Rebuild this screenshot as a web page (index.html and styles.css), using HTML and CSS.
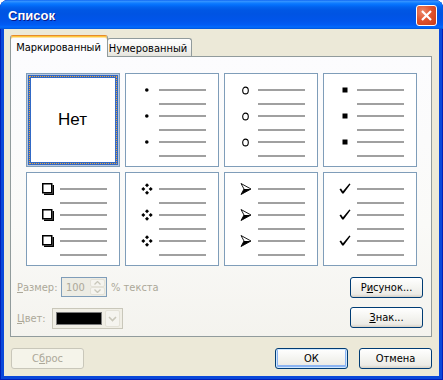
FILE: index.html
```
<!DOCTYPE html>
<html lang="ru">
<head>
<meta charset="utf-8">
<title>Список</title>
<link rel="stylesheet" href="styles.css">
</head>
<body>
<svg class="defs" width="0" height="0" aria-hidden="true">
  <defs>
    <symbol id="b-dot" viewBox="0 0 12 12"><circle cx="5.8" cy="6" r="1.8" fill="#000"/></symbol>
    <symbol id="b-o" viewBox="0 0 12 12"><ellipse cx="5.5" cy="6.5" rx="2.8" ry="3.4" fill="none" stroke="#000" stroke-width="1.1"/></symbol>
    <symbol id="b-sq" viewBox="0 0 12 12"><rect x="3.5" y="3.5" width="5" height="5" fill="#000"/></symbol>
    <symbol id="b-box" viewBox="0 0 12 12"><rect x="0.75" y="0.75" width="9" height="9" fill="#fff" stroke="#000" stroke-width="1.5"/><path d="M10.5 2H12V12H2V10.5H10.5Z" fill="#000"/></symbol>
    <symbol id="b-dia" viewBox="0 0 12 12"><path d="M6 0.3L8 2.3L6 4.3L4 2.3ZM2.3 4L4.3 6L2.3 8L0.3 6ZM9.7 4L11.7 6L9.7 8L7.7 6ZM6 7.7L8 9.7L6 11.7L4 9.7Z" fill="#000"/></symbol>
    <symbol id="b-arr" viewBox="0 0 12 12"><path d="M1 0.5L11 6L1 11.5L4 6Z" fill="#fff" stroke="#000" stroke-width="0.9" stroke-linejoin="round"/><path d="M4 6L11 6L1 11.5Z" fill="#000"/></symbol>
    <symbol id="b-chk" viewBox="0 0 12 12"><path d="M0.5 6.2L2 5.4L3.9 8.2L10.4 0.6L11.5 1.2L4.6 10.6L3.2 10.6Z" fill="#000"/></symbol>
  </defs>
</svg>

<div class="window">
  <div class="titlebar">
    <span class="title">Список</span>
    <span class="close"><svg width="19" height="19" viewBox="0 0 19 19"><path d="M5 5L14 14M14 5L5 14" stroke="#fff" stroke-width="2.2"/></svg></span>
  </div>

  <div class="client">
    <div class="tabs">
      <div class="tab active">Маркированный</div>
      <div class="tab inactive">Нумерованный</div>
    </div>

    <div class="panel">
      <div class="tiles">
        <div class="tile sel"><span class="none">Нет</span></div>

        <div class="tile">
          <div class="item"><div class="row"><svg class="bullet"><use href="#b-dot"/></svg><i class="line"></i></div><div class="row"><span class="bullet"></span><i class="line"></i></div></div>
          <div class="item"><div class="row"><svg class="bullet"><use href="#b-dot"/></svg><i class="line"></i></div><div class="row"><span class="bullet"></span><i class="line"></i></div></div>
          <div class="item"><div class="row"><svg class="bullet"><use href="#b-dot"/></svg><i class="line"></i></div><div class="row"><span class="bullet"></span><i class="line"></i></div></div>
        </div>

        <div class="tile">
          <div class="item"><div class="row"><svg class="bullet"><use href="#b-o"/></svg><i class="line"></i></div><div class="row"><span class="bullet"></span><i class="line"></i></div></div>
          <div class="item"><div class="row"><svg class="bullet"><use href="#b-o"/></svg><i class="line"></i></div><div class="row"><span class="bullet"></span><i class="line"></i></div></div>
          <div class="item"><div class="row"><svg class="bullet"><use href="#b-o"/></svg><i class="line"></i></div><div class="row"><span class="bullet"></span><i class="line"></i></div></div>
        </div>

        <div class="tile">
          <div class="item"><div class="row"><svg class="bullet"><use href="#b-sq"/></svg><i class="line"></i></div><div class="row"><span class="bullet"></span><i class="line"></i></div></div>
          <div class="item"><div class="row"><svg class="bullet"><use href="#b-sq"/></svg><i class="line"></i></div><div class="row"><span class="bullet"></span><i class="line"></i></div></div>
          <div class="item"><div class="row"><svg class="bullet"><use href="#b-sq"/></svg><i class="line"></i></div><div class="row"><span class="bullet"></span><i class="line"></i></div></div>
        </div>

        <div class="tile">
          <div class="item"><div class="row"><svg class="bullet"><use href="#b-box"/></svg><i class="line"></i></div><div class="row"><span class="bullet"></span><i class="line"></i></div></div>
          <div class="item"><div class="row"><svg class="bullet"><use href="#b-box"/></svg><i class="line"></i></div><div class="row"><span class="bullet"></span><i class="line"></i></div></div>
          <div class="item"><div class="row"><svg class="bullet"><use href="#b-box"/></svg><i class="line"></i></div><div class="row"><span class="bullet"></span><i class="line"></i></div></div>
        </div>

        <div class="tile">
          <div class="item"><div class="row"><svg class="bullet"><use href="#b-dia"/></svg><i class="line"></i></div><div class="row"><span class="bullet"></span><i class="line"></i></div></div>
          <div class="item"><div class="row"><svg class="bullet"><use href="#b-dia"/></svg><i class="line"></i></div><div class="row"><span class="bullet"></span><i class="line"></i></div></div>
          <div class="item"><div class="row"><svg class="bullet"><use href="#b-dia"/></svg><i class="line"></i></div><div class="row"><span class="bullet"></span><i class="line"></i></div></div>
        </div>

        <div class="tile">
          <div class="item"><div class="row"><svg class="bullet"><use href="#b-arr"/></svg><i class="line"></i></div><div class="row"><span class="bullet"></span><i class="line"></i></div></div>
          <div class="item"><div class="row"><svg class="bullet"><use href="#b-arr"/></svg><i class="line"></i></div><div class="row"><span class="bullet"></span><i class="line"></i></div></div>
          <div class="item"><div class="row"><svg class="bullet"><use href="#b-arr"/></svg><i class="line"></i></div><div class="row"><span class="bullet"></span><i class="line"></i></div></div>
        </div>

        <div class="tile">
          <div class="item"><div class="row"><svg class="bullet"><use href="#b-chk"/></svg><i class="line"></i></div><div class="row"><span class="bullet"></span><i class="line"></i></div></div>
          <div class="item"><div class="row"><svg class="bullet"><use href="#b-chk"/></svg><i class="line"></i></div><div class="row"><span class="bullet"></span><i class="line"></i></div></div>
          <div class="item"><div class="row"><svg class="bullet"><use href="#b-chk"/></svg><i class="line"></i></div><div class="row"><span class="bullet"></span><i class="line"></i></div></div>
        </div>
      </div>

      <div class="controls">
        <div class="fields">
          <div class="frow">
            <span class="lbl lbl-size"><u>Р</u>азмер:</span>
            <span class="spin">
              <span class="spin-val">100</span>
              <span class="spin-btns">
                <span class="sb"><svg width="7" height="4" viewBox="0 0 7 4"><path d="M0.5 3.5L3.5 0.5L6.5 3.5" fill="none" stroke="#C9C7BA" stroke-width="1.3"/></svg></span>
                <span class="sb"><svg width="7" height="4" viewBox="0 0 7 4"><path d="M0.5 0.5L3.5 3.5L6.5 0.5" fill="none" stroke="#C9C7BA" stroke-width="1.3"/></svg></span>
              </span>
            </span>
            <span class="pct">% текста</span>
          </div>
          <div class="frow">
            <span class="lbl lbl-color"><u>Ц</u>вет:</span>
            <span class="combo">
              <span class="swatch"></span>
              <span class="drop"><svg width="9" height="6" viewBox="0 0 9 6"><path d="M1 1L4.5 4.5L8 1" fill="none" stroke="#C9C7BA" stroke-width="1.6"/></svg></span>
            </span>
          </div>
        </div>
        <div class="rbtns">
          <span class="btn">Р<u>и</u>сунок...</span>
          <span class="btn"><u>З</u>нак...</span>
        </div>
      </div>
    </div>

    <div class="bottom">
      <span class="btn disabled">С<u>б</u>рос</span>
      <span class="spacer"></span>
      <span class="btn default">ОК</span>
      <span class="btn">Отмена</span>
    </div>
  </div>
</div>
</body>
</html>
```
FILE: styles.css
```
* { box-sizing: border-box; }

body {
  margin: 0;
  background: #ffffff;
  font-family: "DejaVu Sans Condensed", "DejaVu Sans", sans-serif;
  font-size: 11px;
  color: #000;
}

.defs { position: absolute; width: 0; height: 0; }

.window {
  width: 443px;
  height: 380px;
  display: flex;
  flex-direction: column;
  border-radius: 8px 8px 0 0;
  overflow: hidden;
  background: #0A48DA;
  box-shadow: inset 1px 0 #0020B8, inset -1px 0 #0020B8, inset 0 -1px #0020B8;
}

.titlebar {
  height: 29px;
  flex: none;
  display: flex;
  align-items: center;
  padding-left: 8px;
  background: linear-gradient(to bottom,
    #0058EE 0px, #3A93FF 1px, #288EFF 2px, #127DFF 3px, #036FFC 5px,
    #0262EE 7px, #0057E5 10px, #0054E3 14px, #0055EB 21px, #005BF5 25px,
    #026AFE 27px, #0062EF 28px, #0052D6 29px);
}

.title {
  flex: 1;
  font: bold 13px "Liberation Sans", Arial, sans-serif;
  color: #fff;
  text-shadow: 1px 1px #0A1A8C;
  padding-top: 1px;
}

.close {
  width: 21px;
  height: 21px;
  margin: 1px 6px 0 0;
  border: 1px solid #fff;
  border-radius: 3px;
  background: radial-gradient(circle at 30% 30%, #ED8A6B 0, #E0542F 45%, #C83A16 100%);
  display: flex;
  align-items: center;
  justify-content: center;
}

.client {
  flex: 1;
  margin: 0 4px 4px;
  background: #ECE9D8;
  display: flex;
  flex-direction: column;
}

/* Tabs */
.tabs {
  display: flex;
  align-items: flex-end;
  margin: 6px 0 0 6px;
  position: relative;
  z-index: 1;
}

.tab {
  display: flex;
  align-items: center;
  justify-content: center;
  border: 1px solid #919B9C;
  border-bottom: 0;
  border-radius: 3px 3px 0 0;
}

.tab.active {
  width: 98px;
  height: 22px;
  margin-bottom: -1px;
  padding-right: 1px;
  padding-top: 1px;
  background: #FCFCFE;
  border-top: 1px solid #E68B2C;
  box-shadow: inset 0 1px #FFC83C, inset 0 2px #FFE3A3;
}

.tab.inactive {
  width: 85px;
  height: 18px;
  margin-left: -1px;
  padding-right: 3px;
  padding-top: 1px;
  background: linear-gradient(#FFFFFF, #F3F3EF 60%, #E5E4DD);
}

/* Panel */
.panel {
  height: 281px;
  margin: 0 7px 0 6px;
  border: 1px solid #919B9C;
  background: linear-gradient(#FCFCFE, #FAFAF8 60%, #F4F3EE);
  display: flex;
  flex-direction: column;
}

.tiles {
  display: grid;
  grid-template-columns: repeat(4, 94px);
  grid-auto-rows: 94px;
  gap: 5px;
  padding: 16px 0 0 15px;
}

.tile {
  background: #fff;
  border: 1px solid #7F9DB9;
  display: flex;
  flex-direction: column;
  padding-top: 10px;
}

.tile.sel {
  padding-top: 0;
  align-items: center;
  justify-content: center;
  box-shadow: inset 0 0 0 1px #B9C9E0, inset 0 0 0 4px #3169C6;
  outline: 1px dotted #F0A63A;
  outline-offset: -4px;
}

.none {
  font-family: "Liberation Sans", Arial, sans-serif;
  font-size: 17px;
  margin-left: -1px;
}

.item {
  display: flex;
  flex-direction: column;
  gap: 2px;
}

.row {
  height: 12px;
  display: flex;
  align-items: center;
  padding-left: 15px;
}

.bullet {
  width: 12px;
  height: 12px;
  margin-right: 6px;
  flex: none;
  display: block;
}

.line {
  width: 47px;
  height: 2px;
  background: #A0A0A0;
}

/* Lower controls */
.controls {
  display: flex;
  justify-content: space-between;
  padding: 11px 8px 0 6px;
}

.fields {
  display: flex;
  flex-direction: column;
  gap: 10px;
}

.frow {
  height: 21px;
  display: flex;
  align-items: center;
  color: #ACA899;
}

.lbl-size { width: 44px; }
.lbl-color { width: 35px; }

.spin {
  width: 46px;
  height: 20px;
  align-self: flex-start;
  border: 1px solid #7F9DB9;
  background: #EDECE4;
  display: flex;
  align-items: stretch;
}

.spin-val {
  flex: 1;
  padding-left: 4px;
  display: flex;
  align-items: center;
}

.spin-btns {
  width: 15px;
  margin: 1px;
  display: flex;
  flex-direction: column;
  gap: 0;
}

.sb {
  flex: 1;
  border: 1px solid #E4E2D8;
  border-radius: 2px;
  background: #F5F4EF;
  display: flex;
  align-items: center;
  justify-content: center;
}

.pct { margin-left: 4px; }

.combo {
  width: 71px;
  height: 21px;
  border: 1px solid #C9C7BA;
  background: #F0EEE5;
  display: flex;
  align-items: center;
  padding: 0 2px 0 3px;
}

.swatch {
  width: 46px;
  height: 13px;
  background: #000;
  border: 1px solid #7A7A7A;
}

.drop {
  width: 15px;
  height: 17px;
  margin-left: auto;
  border: 1px solid #E4E2D8;
  border-radius: 2px;
  background: #F5F4EF;
  display: flex;
  align-items: center;
  justify-content: center;
}

.rbtns {
  display: flex;
  flex-direction: column;
  gap: 9px;
}

/* Buttons */
.btn {
  width: 73px;
  height: 21px;
  border: 1px solid #003C74;
  border-radius: 3px;
  background: linear-gradient(#FFFFFF, #F4F4F0 50%, #ECEBE6 85%, #D6D0C5);
  display: flex;
  align-items: center;
  justify-content: center;
  color: #000;
}

.btn.default {
  box-shadow: inset 0 0 0 1px #CEE7FF, inset 0 -1px 0 2px #8CB4F2;
}

.btn.disabled {
  border-color: #C9C7BA;
  background: #F5F4EA;
  color: #ACA899;
}

.bottom {
  display: flex;
  gap: 11px;
  padding: 11px 7px 0 7px;
}

.spacer { flex: 1; }
```
